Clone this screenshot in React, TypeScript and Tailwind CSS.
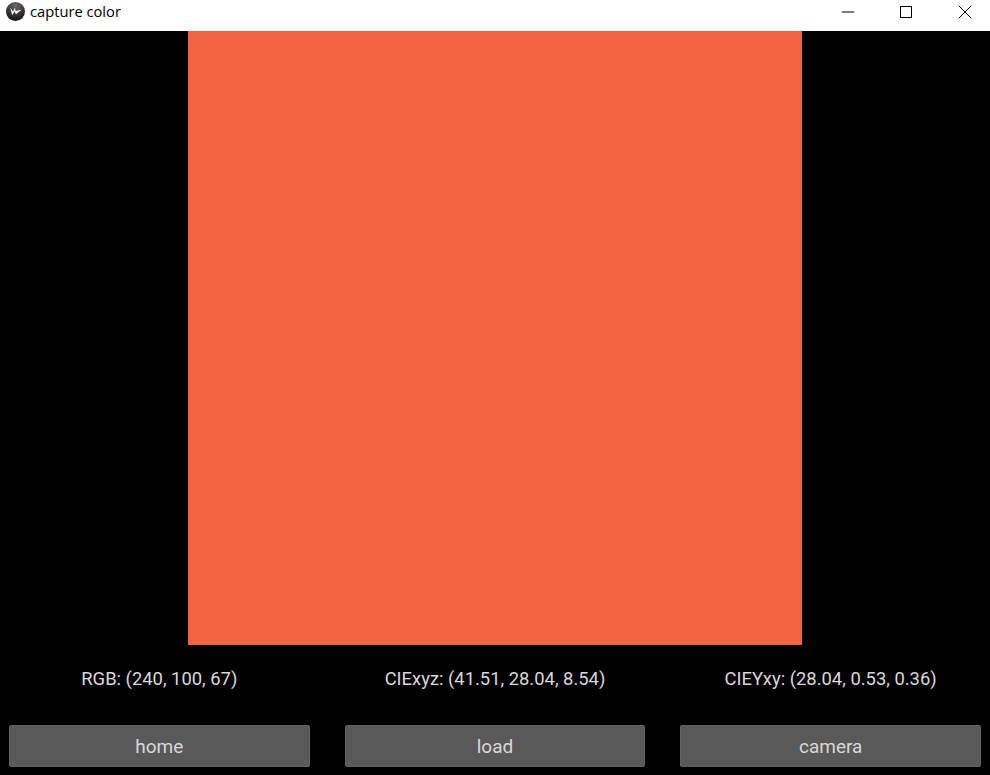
import { Minus, X } from "lucide-react";

const readings = [
  "RGB: (240, 100, 67)",
  "CIExyz: (41.51, 28.04, 8.54)",
  "CIEYxy: (28.04, 0.53, 0.36)",
];

const actions = ["home", "load", "camera"];

function AppIcon() {
  return (
    <svg width="19" height="19" viewBox="0 0 20 20">
      <defs>
        <radialGradient id="ball" cx="50%" cy="20%" r="80%">
          <stop offset="0%" stopColor="#6a6a6a" />
          <stop offset="100%" stopColor="#101010" />
        </radialGradient>
      </defs>
      <circle cx="10" cy="10" r="10" fill="url(#ball)" />
      <path d="M4.5 6 L6.5 14 L9 10 L10.5 13 L16.5 8 L10.5 9.5 L9 6 L7.5 10 Z" fill="#f2f2f2" />
    </svg>
  );
}

export default function App() {
  return (
    <div className="w-[990px] h-[775px] bg-black flex flex-col overflow-hidden font-['Roboto',sans-serif]">
      <div className="h-[31px] bg-white flex items-center shrink-0 pl-[6px] pb-[8px]">
        <AppIcon />
        <span className="ml-[5px] text-[14.7px] text-black font-['Open_Sans',sans-serif]">capture color</span>
        <div className="ml-auto -mr-[5px] flex items-center text-black">
          <div className="w-[58px] flex justify-center">
            <Minus size={20} strokeWidth={1} absoluteStrokeWidth />
          </div>
          <div className="w-[58px] flex justify-center">
            <div className="w-[12px] h-[12px] border border-black" />
          </div>
          <div className="w-[60px] flex justify-center">
            <X size={24} strokeWidth={1} absoluteStrokeWidth />
          </div>
        </div>
      </div>

      <div className="h-[614px] flex justify-center shrink-0">
        <div className="w-[614px] h-full bg-[#f06443]" />
      </div>

      <div className="grid grid-cols-3 gap-x-[35px] px-[9px] h-[70px] pb-[2px] items-center text-center text-[18.4px] text-[#d8d8d8]">
        {readings.map((r) => (
          <div key={r}>{r}</div>
        ))}
      </div>

      <div className="grid grid-cols-3 gap-x-[35px] px-[9px] mt-[10px]">
        {actions.map((a) => (
          <button
            key={a}
            className="h-[42px] pt-[2px] bg-[#595959] border border-[#636363] rounded-[2px] text-[19px] text-[#d8d8d8] text-center"
          >
            {a}
          </button>
        ))}
      </div>
    </div>
  );
}
